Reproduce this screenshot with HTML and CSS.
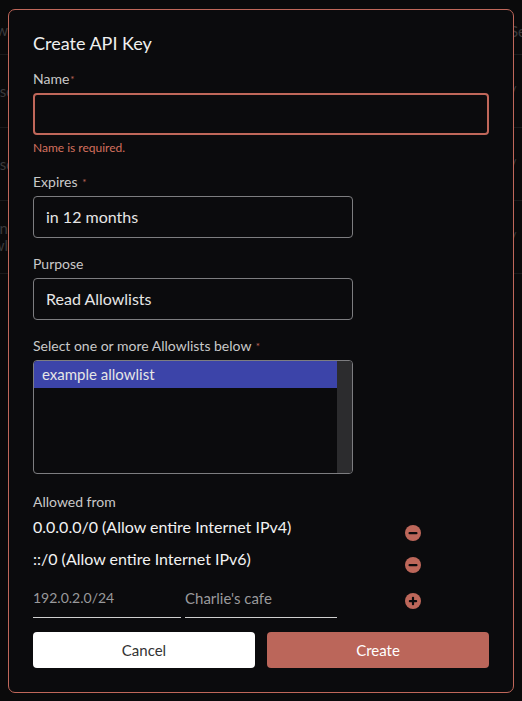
FILE: index.html
```html
<!DOCTYPE html>
<html>
<head>
	<meta charset="UTF-8">
	<title>Create API Key</title>
	<link rel="stylesheet" href="styles.css">
</head>
<body>
	<div class="backdrop">
		<div class="bg-row bg-head"><span class="bg-left">Allow</span><span class="bg-right">Sec</span></div>
		<div class="bg-row"><span class="bg-left">Purpose</span><span class="bg-right">/</span></div>
		<div class="bg-row"><span class="bg-left">Purpose</span><span class="bg-right">/</span></div>
		<div class="bg-row bg-two"><span class="bg-left">Admin<br>Allowl</span><span class="bg-right">/</span></div>
	</div>

	<div class="modal">
		<h1 class="title">Create API Key</h1>

		<label class="label">Name<span class="req">*</span></label>
		<div class="input input-error"></div>
		<div class="error">Name is required.</div>

		<label class="label gap">Expires <span class="req">*</span></label>
		<div class="input input-short">in 12 months</div>

		<label class="label gap">Purpose</label>
		<div class="input input-short">Read Allowlists</div>

		<label class="label gap">Select one or more Allowlists below <span class="req">*</span></label>
		<div class="listbox">
			<div class="options">
				<div class="option selected">example allowlist</div>
			</div>
			<div class="scrollbar"></div>
		</div>

		<label class="label gap-lg">Allowed from</label>
		<div class="cidr-list">
			<div class="cidr-row">
				<div class="cidr-text">0.0.0.0/0 (Allow entire Internet IPv4)</div>
				<span class="icon-btn">
					<svg width="16" height="16" viewBox="0 0 16 16"><circle cx="8" cy="8" r="8" fill="#bd675a"/><rect x="3.5" y="7" width="9" height="2.2" rx="1" fill="#0b0b0d"/></svg>
				</span>
			</div>
			<div class="cidr-row">
				<div class="cidr-text">::/0 (Allow entire Internet IPv6)</div>
				<span class="icon-btn">
					<svg width="16" height="16" viewBox="0 0 16 16"><circle cx="8" cy="8" r="8" fill="#bd675a"/><rect x="3.5" y="7" width="9" height="2.2" rx="1" fill="#0b0b0d"/></svg>
				</span>
			</div>
			<div class="new-row">
				<div class="line-input line-ip">192.0.2.0/24</div>
				<div class="line-input line-name">Charlie's cafe</div>
				<span class="icon-btn icon-add">
					<svg width="16" height="16" viewBox="0 0 16 16"><circle cx="8" cy="8" r="8" fill="#bd675a"/><rect x="3.8" y="7" width="8.4" height="2.2" rx="1" fill="#0b0b0d"/><rect x="6.9" y="3.8" width="2.2" height="8.4" rx="1" fill="#0b0b0d"/></svg>
				</span>
			</div>
		</div>

		<div class="actions">
			<button class="btn btn-cancel">Cancel</button>
			<button class="btn btn-create">Create</button>
		</div>
	</div>
</body>
</html>
```

FILE: styles.css
```css
body {
	background-color: #0a0a0b;
	font-family: Lato, "Open Sans", sans-serif;
	margin: 0;
	padding: 0;
	overflow: hidden;
	height: 701px;
	position: relative;
}

/* page behind the dialog */
.bg-row {
	border-bottom: 1px solid #1a1a1b;
	color: #3a3a3c;
	display: flex;
	font-size: 15px;
	height: 72px;
	justify-content: space-between;
	align-items: center;
}

.bg-head {
	height: 55px;
	align-items: flex-start;
	padding-top: 22px;
	box-sizing: border-box;
}

.bg-left {
	margin-left: -40px;
	width: 48px;
	text-align: right;
	line-height: 17px;
}

.bg-right {
	margin-right: -12px;
	width: 24px;
}

.modal {
	background-color: #0b0b0d;
	border: 1px solid #c0675a;
	border-radius: 7px;
	box-sizing: border-box;
	left: 8px;
	top: 9px;
	width: 506px;
	height: 684px;
	padding: 21px 24px 0;
	position: absolute;
}

.title {
	color: #f0f0f0;
	font-size: 18px;
	font-weight: normal;
	line-height: 24px;
	margin: 0 0 14px;
}

.label {
	color: #c9c9c9;
	display: block;
	font-size: 14px;
	line-height: 20px;
}

.req {
	color: #c0675a;
	font-size: 10px;
	vertical-align: top;
	margin-left: 1px;
}

.gap {
	margin-top: 16px;
}

.gap-lg {
	margin-top: 18px;
}

.input {
	border: 1px solid #7d7d80;
	border-radius: 4px;
	box-sizing: border-box;
	color: #e6e6e6;
	font-size: 16px;
	height: 42px;
	line-height: 40px;
	margin-top: 4px;
	padding: 0 12px;
}

.input-error {
	border: 2px solid #c0675a;
	width: 456px;
}

.input-short {
	width: 320px;
}

.error {
	color: #d4705e;
	font-size: 12px;
	line-height: 16px;
	margin-top: 5px;
}

.listbox {
	border: 1px solid #7d7d80;
	border-radius: 4px;
	box-sizing: border-box;
	display: flex;
	height: 114px;
	margin-top: 4px;
	overflow: hidden;
	width: 320px;
}

.options {
	flex: 1;
}

.option {
	color: #e6e6e6;
	font-size: 15px;
	height: 27px;
	line-height: 27px;
	padding-left: 8px;
}

.selected {
	background-color: #3c44a9;
}

.scrollbar {
	background-color: #2c2c2e;
	width: 15px;
}

.cidr-list {
	padding-top: 3px;
}

.cidr-row {
	display: flex;
	height: 32px;
}

.cidr-text {
	color: #f2f2f2;
	font-size: 16px;
	line-height: 22px;
	margin-top: 1px;
	width: 372px;
}

.icon-btn {
	display: block;
	height: 16px;
	margin-top: 10px;
	width: 16px;
}

.new-row {
	display: flex;
	height: 40px;
}

.line-input {
	border-bottom: 1px solid #cfcfcf;
	box-sizing: border-box;
	color: #9a9a9c;
	font-size: 15px;
	height: 39px;
	line-height: 38px;
	margin-right: 4px;
}

.line-ip {
	width: 148px;
	font-size: 14px;
}

.line-name {
	width: 152px;
	margin-right: 68px;
}

.icon-add {
	margin-top: 14px;
}

.actions {
	display: flex;
	gap: 12px;
	margin-top: 13px;
}

.btn {
	border: none;
	border-radius: 4px;
	cursor: pointer;
	flex: 1;
	font-family: inherit;
	font-size: 15px;
	height: 36px;
}

.btn-cancel {
	background-color: #ffffff;
	color: #333;
}

.btn-create {
	background-color: #bb665a;
	color: #fff;
}
```
